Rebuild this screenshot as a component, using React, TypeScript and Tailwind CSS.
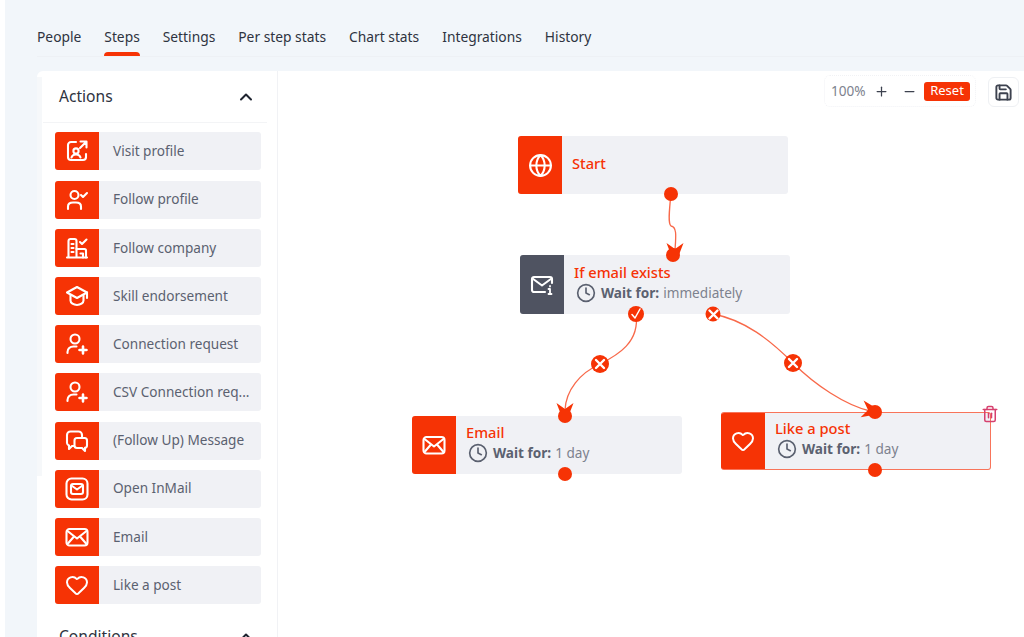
import React from "react";
import { ChevronUp, Clock, Globe, Heart, Minus, Plus, Save, Trash2 } from "lucide-react";

const tabs = ["People", "Steps", "Settings", "Per step stats", "Chart stats", "Integrations", "History"];

const iconProps = {
  width: 24,
  height: 24,
  viewBox: "0 0 24 24",
  fill: "none",
  stroke: "currentColor",
  strokeWidth: 2.100,
  strokeLinecap: "round" as const,
  strokeLinejoin: "round" as const,
};

const VisitIcon = () => (
  <svg {...iconProps}>
    <path d="M11 3H6a3 3 0 0 0-3 3v12a3 3 0 0 0 3 3h12a3 3 0 0 0 3-3v-3" />
    <path d="M15.500 2.500h6V8.500M21.500 2.500 15 9" />
    <circle cx="11" cy="12" r="2.600" />
    <path d="M6.500 18.500c.5-2 2-3 4.500-3s4 1 4.500 3" />
  </svg>
);

const FollowIcon = () => (
  <svg {...iconProps}>
    <circle cx="9.500" cy="7" r="4" />
    <path d="M3 21v-2.500C3 15.500 5 14.500 8 14.500h3c3 0 5 1 5 4V21" />
    <path d="m16 7 2 2 4-4" />
  </svg>
);

const CompanyIcon = () => (
  <svg {...iconProps}>
    <path d="M2 21.500h20M3.500 21.500V5a2 2 0 0 1 2-2h4a2 2 0 0 1 2 2v16.500" />
    <path d="M6.500 8h2M6.500 12h2M6.500 16h2" />
    <path d="M11.500 13h8a1.500 1.500 0 0 1 1.500 1.500v7M15.500 17.500h2.500v4" />
    <path d="m15 6 2 2 4.500-4.500" />
  </svg>
);

const CapIcon = () => (
  <svg {...iconProps}>
    <path d="M12 3 22 8.500 12 14 2 8.500Z" />
    <path d="M5.500 11.500v5c0 2.500 3 4.500 6.500 4.500s6.500-2 6.500-4.500v-5" />
    <path d="M22 8.500V14" />
  </svg>
);

const ConnectIcon = () => (
  <svg {...iconProps}>
    <circle cx="10" cy="7" r="4.500" />
    <path d="M2.500 21v-1c0-3.500 2.500-5.500 6-5.500h3" />
    <path d="M18 14.500v7M14.500 18h7" strokeWidth={2.600} />
  </svg>
);

const MessageIcon = () => (
  <svg {...iconProps}>
    <path d="M8.500 17H7l-3 3v-3.500A3 3 0 0 1 2 14V6a3.500 3.500 0 0 1 3.500-3.500h8A3.500 3.500 0 0 1 17 6v2" />
    <path d="M12 9h7.500A2.500 2.500 0 0 1 22 11.500v5a2.500 2.500 0 0 1-2 2.400V22l-3-3h-5a2.500 2.500 0 0 1-2.500-2.500v-5A2.500 2.500 0 0 1 12 9Z" />
  </svg>
);

const InMailIcon = () => (
  <svg {...iconProps}>
    <rect x="1.500" y="1.500" width="21" height="21" rx="5" />
    <rect x="6" y="7" width="12" height="10" rx="2" />
    <path d="m6.500 8.500 5.500 4 5.500-4" />
  </svg>
);

const EnvelopeIcon = () => (
  <svg {...iconProps}>
    <rect x="1.500" y="4" width="21" height="16.500" rx="3" />
    <path d="m2.500 6 9.500 7.500L21.500 6M2.500 19l6.500-7.500M21.500 19 15 11.500" />
  </svg>
);

const ConditionMailIcon = () => (
  <svg {...iconProps}>
    <path d="M15 19H4a2 2 0 0 1-2-2V6a2 2 0 0 1 2-2h16a2 2 0 0 1 2 2v4" />
    <path d="m2.500 5.500 9.500 7 9.500-7" />
    <path d="M20 13v.500M18.500 16H20v5M18.500 21h3" strokeWidth={1.800} />
  </svg>
);

const actions = [
  { label: "Visit profile", icon: <VisitIcon /> },
  { label: "Follow profile", icon: <FollowIcon /> },
  { label: "Follow company", icon: <CompanyIcon /> },
  { label: "Skill endorsement", icon: <CapIcon /> },
  { label: "Connection request", icon: <ConnectIcon /> },
  { label: "CSV Connection req...", icon: <ConnectIcon /> },
  { label: "(Follow Up) Message", icon: <MessageIcon /> },
  { label: "Open InMail", icon: <InMailIcon /> },
  { label: "Email", icon: <EnvelopeIcon /> },
  { label: "Like a post", icon: <Heart size={24} strokeWidth={2} /> },
];

const Dot = ({ className }: { className: string }) => (
  <div className={`absolute h-[14px] w-[14px] -translate-x-1/2 -translate-y-1/2 rounded-full bg-[#f63305] ${className}`} />
);

const Badge = ({ className, kind, size }: { className: string; kind: "x" | "check"; size: string }) => (
  <div className={`absolute flex -translate-x-1/2 -translate-y-1/2 items-center justify-center rounded-full bg-[#f63305] ${size} ${className}`}>
    <svg width="12" height="12" viewBox="0 0 12 12" fill="none" stroke="white" strokeWidth={kind === "x" ? 2.400 : 1.500} strokeLinecap="round" strokeLinejoin="round">
      {kind === "x" ? <path d="m2 2 8 8M10 2l-8 8" /> : <path d="m2 6.500 3 3.500 5-9" />}
    </svg>
  </div>
);

const StepNode = ({
  className,
  title,
  wait,
  icon,
  dark,
  selected,
}: {
  className: string;
  title: string;
  wait?: string;
  icon: React.ReactNode;
  dark?: boolean;
  selected?: boolean;
}) => (
  <div
    className={`absolute flex w-[270px] overflow-hidden rounded-[3px] bg-[#f0f1f5] ${className} ${
      selected ? "border-t border-r border-b border-[#f8745a]" : ""
    }`}
  >
    <div className={`flex w-[44px] shrink-0 items-center justify-center text-white ${dark ? "bg-[#4f5361]" : "bg-[#f63305]"}`}>{icon}</div>
    <div className="flex flex-col justify-center pb-[4px] pl-[10px]">
      <div className="text-[14.700px] leading-[19px] font-medium text-[#f63305]">{title}</div>
      {wait && (
        <div className="mt-[1px] flex items-center pl-[2px] text-[13.600px] leading-[20px] text-[#7d828e]">
          <Clock size={20} strokeWidth={2} className="mr-[5px] text-[#5b6170]" />
          <span className="mr-1 font-bold text-[#5b6170]">Wait for:</span>
          {wait}
        </div>
      )}
    </div>
  </div>
);

const Arrow = ({ x, y, rotate }: { x: number; y: number; rotate: number }) => (
  <path d="M-8.500-9 0-3 8.500-9 3.500 4H-3.500Z" fill="#f63305" transform={`translate(${x} ${y}) rotate(${rotate})`} />
);

export default function App() {
  return (
    <div className="flex h-[637px] w-[1024px] overflow-hidden bg-white font-['Noto_Sans',sans-serif]">
      <div className="w-[5px] shrink-0 bg-white" />
      <div className="flex min-w-0 flex-1 flex-col bg-[#f2f6fa]">
        <div className="h-[71px] shrink-0 pl-[32px] pt-[26px]">
          <div className="flex h-[31px] items-start gap-[23px] border-b border-[#eef1f5]">
            {tabs.map((tab) => (
              <div key={tab} className="relative h-[30px] text-[13.800px] leading-[22px] text-[#2e3340]">
                {tab}
                {tab === "Steps" && <div className="absolute inset-x-0 bottom-0 h-[4px] rounded-t-[4px] bg-[#f63305]" />}
              </div>
            ))}
          </div>
        </div>
        <div className="flex min-h-0 flex-1 pl-[32px]">
          <div className="relative w-[241px] shrink-0 rounded-tl-[6px] border-r border-[#f1f2f5] bg-white pl-[6px] pr-[10px]">
            <div className="absolute left-0 top-[6px] h-[399px] w-[5px] bg-[#f6f8fa]" />
            <div className="flex h-[52px] items-center justify-between border-b border-[#f3f4f6] pl-[16px] pr-[11px] text-[15.600px] text-[#2e3340]">
              Actions
              <ChevronUp size={20} strokeWidth={2.400} className="text-[#1f2430]" />
            </div>
            <div className="flex flex-col gap-[10.200px] pl-[12px] pr-[6px] pt-[9.400px]">
              {actions.map((item) => (
                <div key={item.label} className="flex h-[38px] overflow-hidden rounded-[3px] bg-[#f0f1f5]">
                  <div className="flex w-[44px] shrink-0 items-center justify-center bg-[#f63305] text-white">{item.icon}</div>
                  <div className="flex items-center pb-[0.500px] pl-[14px] text-[13.600px] leading-[20px] text-[#5b6170]">{item.label}</div>
                </div>
              ))}
            </div>
            <div className="mt-[21px] flex items-center justify-between pl-[16px] pr-[11px] text-[15.600px] text-[#2e3340]">
              Conditions
              <ChevronUp size={20} strokeWidth={2.400} className="text-[#1f2430]" />
            </div>
          </div>
          <div className="relative min-w-0 flex-1 bg-white">
            {/* canvas origin is at x=278, y=71 */}
            <div className="absolute left-[546px] top-[4px] flex h-[32px] items-center rounded-[6px] border border-dotted border-[#f1f2f5] pl-[6px] pr-[5px] text-[13.600px] text-[#7d828e]">
              <span className="w-[36px]">100%</span>
              <Plus size={15} strokeWidth={2} className="ml-[7px] text-[#3d424f]" />
              <Minus size={15} strokeWidth={2} className="ml-[13px] text-[#3d424f]" />
              <span className="ml-[7px] flex h-[19px] w-[46px] items-center justify-center rounded-[3px] bg-[#f63305] text-[13px] text-white">Reset</span>
            </div>
            <div className="absolute left-[710px] top-[6px] flex h-[30px] w-[31px] items-center justify-center rounded-[6px] border border-[#eef0f3] bg-white text-[#3d424f]">
              <Save size={19} strokeWidth={2.400} />
            </div>

            <StepNode className="left-[240px] top-[65px] h-[58px]" title="Start" icon={<Globe size={25} strokeWidth={2} />} />
            <StepNode className="left-[242px] top-[184px] h-[59px]" title="If email exists" wait="immediately" dark icon={<ConditionMailIcon />} />
            <StepNode className="left-[134px] top-[345px] h-[58px]" title="Email" wait="1 day" icon={<EnvelopeIcon />} />
            <StepNode className="left-[443px] top-[341px] h-[58px]" title="Like a post" wait="1 day" selected icon={<Heart size={24} strokeWidth={2} />} />

            <svg className="pointer-events-none absolute left-0 top-0" width="746" height="566" viewBox="278 71 746 566" fill="none">
              <g stroke="#f8694a" strokeWidth="1.300">
                <path d="M671 194C669 212 668 224 671 226C677 227 676 236 675 250" />
                <path d="M636 314C640 342 618 355 600 364C580 373 566 390 565 410" />
                <path d="M713 314C745 320 770 340 793 363C815 385 845 405 870 411" />
              </g>
              <Arrow x={675} y={252} rotate={0} />
              <Arrow x={565} y={412} rotate={0} />
              <Arrow x={871} y={410.500} rotate={-80} />
            </svg>

            <Dot className="left-[393px] top-[123px]" />
            <Dot className="left-[395px] top-[184px]" />
            <Dot className="left-[287px] top-[345px]" />
            <Dot className="left-[287px] top-[403px]" />
            <Dot className="left-[597px] top-[341px]" />
            <Dot className="left-[597px] top-[399px]" />
            <Badge className="left-[358px] top-[243px]" kind="check" size="h-[16px] w-[16px]" />
            <Badge className="left-[435px] top-[243px]" kind="x" size="h-[15px] w-[15px]" />
            <Badge className="left-[322px] top-[293px]" kind="x" size="h-[18px] w-[18px]" />
            <Badge className="left-[515px] top-[292px]" kind="x" size="h-[18px] w-[18px]" />
            <Trash2 size={18} strokeWidth={2} className="absolute left-[703px] top-[334px] text-[#d6406e]" />
          </div>
        </div>
      </div>
    </div>
  );
}
